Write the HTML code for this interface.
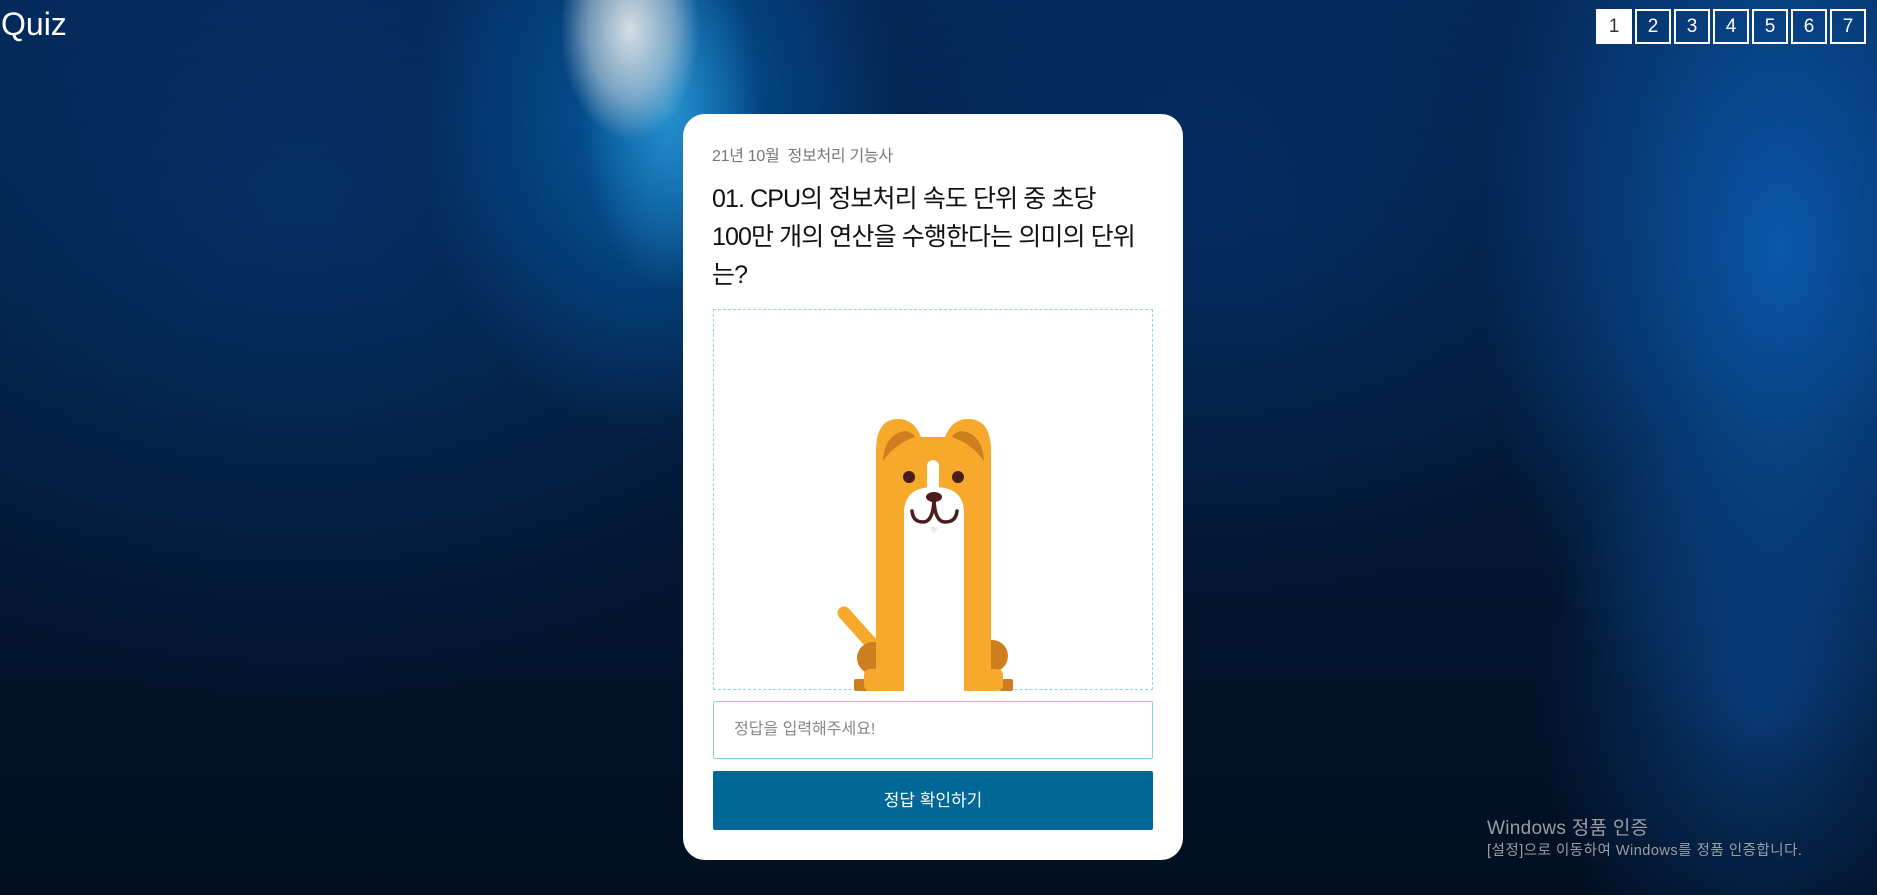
<!DOCTYPE html>
<html><head><meta charset="utf-8">
<style>
*{margin:0;padding:0;box-sizing:border-box}
html,body{width:1877px;height:895px;overflow:hidden}
body{position:relative;font-family:"Liberation Sans","Noto Sans CJK KR",sans-serif;
background:
radial-gradient(ellipse 70px 110px at 630px 30px, rgba(225,228,230,.95), rgba(190,205,215,.6) 60%, rgba(0,0,0,0) 100%),
radial-gradient(ellipse 90px 180px at 670px 110px, rgba(40,150,210,.9), rgba(0,0,0,0) 100%),
radial-gradient(ellipse 240px 320px at 660px 120px, rgba(5,95,170,.9), rgba(0,0,0,0) 100%),
radial-gradient(ellipse 300px 520px at 1780px 250px, rgba(10,90,175,.95), rgba(0,0,0,0) 100%),
radial-gradient(ellipse 220px 300px at 1760px 700px, rgba(10,70,140,.7), rgba(0,0,0,0) 100%),
radial-gradient(ellipse 500px 400px at 1200px 200px, rgba(5,50,110,.7), rgba(0,0,0,0) 100%),
radial-gradient(ellipse 600px 500px at 300px 200px, rgba(5,55,115,.7), rgba(0,0,0,0) 100%),
linear-gradient(#042552,#031630 60%,#020f22);}
.quiz{position:absolute;left:1px;top:6px;color:#fff;font-size:32px}
.pg{position:absolute;top:9px;left:1596px;display:flex;gap:3px}
.pg div{width:36px;height:35px;border:2px solid #fff;color:#fff;font-size:19px;text-align:center;line-height:31px}
.pg div.a{background:#fff;color:#333}
.card{position:absolute;left:683px;top:114px;width:500px;height:746px;background:#fff;border-radius:22px}
.sub{position:absolute;left:29px;top:28px;color:#777;font-size:16px;letter-spacing:-0.3px}
.q{position:absolute;left:29px;top:66px;width:450px;color:#111;font-size:25px;line-height:38px;letter-spacing:-0.9px}
.img{position:absolute;left:30px;top:195px;width:440px;height:381px;border:1px dashed #8fd3ee}
.img svg{position:absolute;left:0;top:0}
.inp{position:absolute;left:30px;top:587px;width:440px;height:58px;border:1px solid #86cfee;border-radius:2px;color:#888;font-size:16px;line-height:56px;padding-left:20px}
.btn{position:absolute;left:30px;top:657px;width:440px;height:59px;background:#006898;border-radius:2px;color:#fff;font-size:17px;text-align:center;line-height:59px}
.w1{position:absolute;left:1487px;top:813px;color:#9a9ea4;font-size:19px;letter-spacing:0.3px}
.w2{position:absolute;left:1487px;top:839px;color:#9a9ea4;font-size:14.5px;letter-spacing:0.5px}
</style></head><body>
<div class="quiz">Quiz</div>
<div class="pg"><div class="a">1</div><div>2</div><div>3</div><div>4</div><div>5</div><div>6</div><div>7</div></div>
<div class="card">
<div class="sub">21년 10월 &nbsp;정보처리 기능사</div>
<div class="q">01. CPU의 정보처리 속도 단위 중 초당<br>100만 개의 연산을 수행한다는 의미의 단위<br>는?</div>
<div class="img">
<svg width="440" height="381" viewBox="713 309 440 381">
<line x1="843" y1="612" x2="870" y2="642" stroke="#f7a92c" stroke-width="13" stroke-linecap="round"/>
<circle cx="872" cy="657" r="16" fill="#cd7e1e"/>
<circle cx="991" cy="655" r="16" fill="#cd7e1e"/>
<rect x="853" y="678" width="14" height="12" rx="2" fill="#cd7e1e"/>
<rect x="998" y="678" width="14" height="12" rx="2" fill="#cd7e1e"/>
<path d="M875 690 V450 Q875 418 897 418 Q913 418 920 436 H944 Q951 418 967 418 Q990 418 990 450 V690 Z" fill="#f7a92c"/>
<path d="M882 460 Q884 432 905 430 Q911 431 914 436 Q895 442 882 460Z" fill="#cd7e1e"/>
<path d="M983 460 Q981 432 960 430 Q954 431 951 436 Q970 442 983 460Z" fill="#cd7e1e"/>
<rect x="863" y="668" width="40" height="22" rx="6" fill="#f7a92c"/>
<rect x="962" y="668" width="40" height="22" rx="6" fill="#f7a92c"/>
<path d="M903 690 V512 Q903 486 933 486 Q963 486 963 512 V690 Z" fill="#fff"/>
<rect x="926" y="459" width="12" height="40" rx="6" fill="#fff"/>
<circle cx="908" cy="476" r="6" fill="#4a1c1c"/>
<circle cx="957" cy="476" r="6" fill="#4a1c1c"/>
<ellipse cx="933" cy="496" rx="8" ry="5" fill="#4a1c1c"/>
<path d="M911 510 Q912 521 922 521 Q932 521 933 499 Q934 521 944 521 Q955 521 956 510" fill="none" stroke="#4a1c1c" stroke-width="3.5" stroke-linecap="round"/>
<path d="M929 526 L937 526 L933 533Z" fill="#e6e9ee"/>
</svg>
</div>
<div class="inp">정답을 입력해주세요!</div>
<div class="btn">정답 확인하기</div>
</div>
<div class="w1">Windows 정품 인증</div>
<div class="w2">[설정]으로 이동하여 Windows를 정품 인증합니다.</div>
</body></html>
